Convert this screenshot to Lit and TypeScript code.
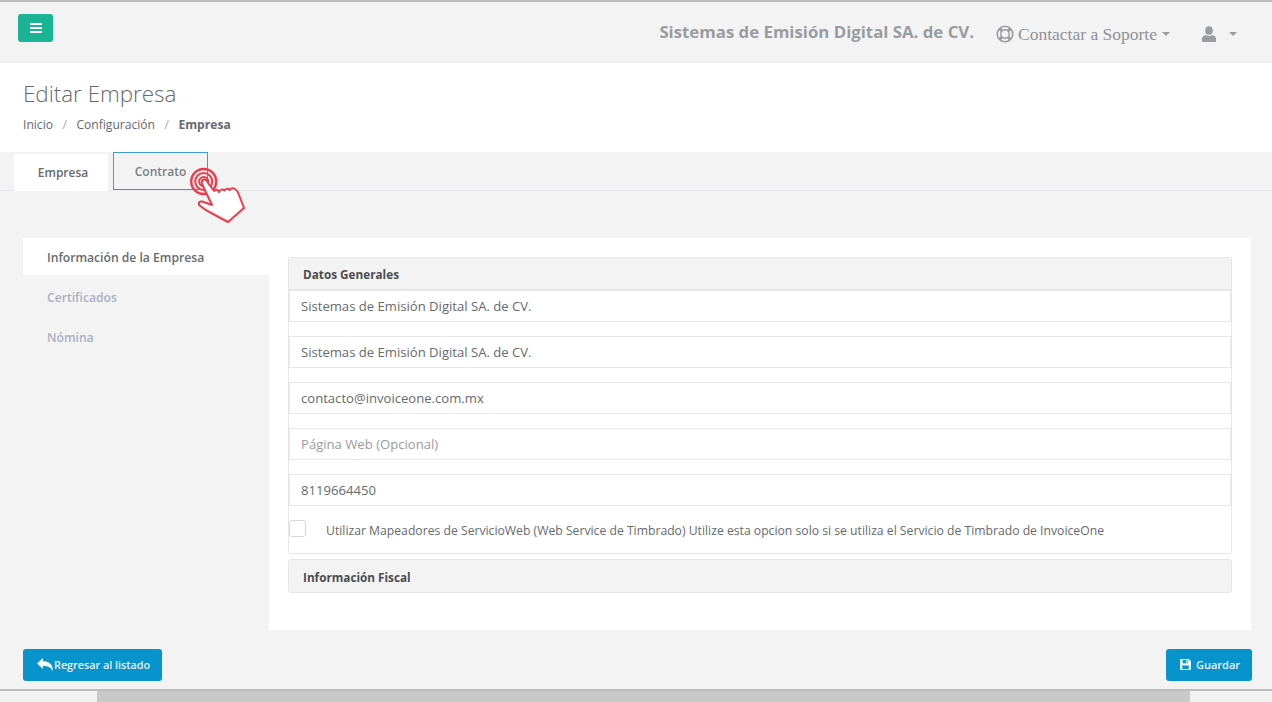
import { LitElement, html, css } from "lit";
import { customElement } from "lit/decorators.js";

@customElement("app-root")
export class AppRoot extends LitElement {
  static styles = css`
    :host { display: block; width: 1272px; height: 702px; overflow: hidden; position: relative; background: #f3f3f4; font-family: "Open Sans", sans-serif; color: #676a6c; font-size: 13px; }
    .page { display: flex; flex-direction: column; height: 702px; }
    .top { height: 60px; border-top: 2px solid #bbb; border-bottom: 1px solid #ececec; display: flex; align-items: flex-start; padding: 0 35px 0 18px; }
    .menu { width: 35px; height: 28px; margin-top: 12px; background: #1ab394; border-radius: 3px; display: flex; align-items: center; justify-content: center; }
    .right { margin-left: auto; display: flex; align-items: center; height: 60px; color: #999c9e; }
    .company { font-weight: 700; font-size: 16.8px; color: #999c9e; margin-right: 22px; margin-top: -1px; }
    .support { font-family: "Liberation Serif", serif; font-size: 17.5px; color: #8f9294; display: flex; align-items: center; gap: 4px; margin-top: 4px; }
    .caret { width: 0; height: 0; border-left: 4px solid transparent; border-right: 4px solid transparent; border-top: 4px solid #999c9e; margin-left: 1px; }
    .user { display: flex; align-items: center; margin-left: 32px; gap: 13px; margin-top: 3px; }
    .title { height: 89px; background: #fff; box-sizing: border-box; padding: 16px 23px 0; }
    h2 { margin: 0; font-weight: 300; font-size: 22.4px; line-height: 30px; color: #676a6c; }
    .crumbs { display: flex; margin-top: 7px; font-size: 12.1px; line-height: 17px; }
    .crumbs .sep { color: #a9abad; margin: 0 9.5px; }
    .crumbs b { font-weight: 700; }
    .tabs { display: flex; height: 38px; padding-left: 14px; gap: 5px; border-bottom: 1px solid #e7eaec; box-sizing: content-box; }
    .tab { box-sizing: border-box; width: 95px; display: flex; align-items: center; justify-content: center; font-weight: 600; font-size: 12px; color: #676a6c; }
    .tab.on { background: #fff; margin-top: 2px; height: 37px; width: 94px; border-radius: 3px 3px 0 0; font-weight: 600; margin-bottom: -1px; padding: 0 0 1px 4px; }
    .tab.focus { border: 1px solid #3ba0d0; height: 38px; color: #7c7f81; }
    .panel { margin: 47px 21px 0 23px; height: 392px; display: flex; background: #f3f3f4; box-sizing: border-box; }
    .side { width: 246px; flex: none; }
    .side div { height: 40px; box-sizing: border-box; padding-left: 24px; display: flex; align-items: center; font-weight: 600; font-size: 12.15px; color: #a7b1c2; }
    .side div.on { height: 37px; background: #fff; color: #676a6c; padding-top: 1px; }
    .side div.second { margin-top: 2px; }
    .main { flex: 1; background: #fff; padding: 19px 19px 0 19px; }
    .box { border: 1px solid #e7e7e7; border-radius: 3px; }
    .box-h { height: 32px; box-sizing: border-box; background: #f3f3f3; border-bottom: 1px solid #e7e7e7; padding-left: 14px; display: flex; align-items: center; font-weight: 700; font-size: 11.75px; color: #4b4e50; border-radius: 3px 3px 0 0; }
    .fields { display: flex; flex-direction: column; gap: 14px; }
    .fld { display: block; box-sizing: border-box; width: 100%; height: 32px; border: 1px solid #e7e7e7; background: #fff; outline: none; padding: 0 11px; margin: 0; font: 13.1px "Open Sans", sans-serif; color: #676a6c; border-radius: 0; }
    .fld::placeholder { color: #9a9c9e; opacity: 1; }
    .check { display: flex; align-items: flex-start; height: 47px; }
    .cb { width: 15px; height: 15px; border: 1px solid #d8d8d8; border-radius: 3px; background: #fff; margin-top: 14px; flex: none; }
    .check span { margin-left: 20px; margin-top: 16px; font-size: 12.2px; line-height: 17px; color: #676a6c; }
    .fiscal { margin-top: 5px; height: 34px; box-sizing: border-box; background: #f3f3f3; padding: 1px 0 0 14px; display: flex; align-items: center; font-weight: 700; font-size: 11.75px; color: #4b4e50; }
    .actions { display: flex; justify-content: space-between; margin: 19px 20px 0 23px; }
    .btn { height: 32px; box-sizing: border-box; background: #0793cc; color: #e6f3fa; border-radius: 3px; display: flex; align-items: center; font-weight: 600; font-size: 10.8px; padding-bottom: 1px; }
    .back { width: 139px; padding-left: 14px; gap: 1px; }
    .save { width: 86px; padding-left: 14px; gap: 5px; font-size: 11px; }
    .scroll { margin-top: auto; height: 13px; border-top: 2px solid #bdbdbd; background: #f1f1f1; box-sizing: border-box; padding-left: 97px; }
    .thumb { width: 1093px; height: 11px; background: #c9c9c9; }
    .hand { position: absolute; left: 188px; top: 165px; width: 60px; height: 60px; }
    svg { display: block; }
  `;

  render() {
    return html`
      <div class="page">
        <div class="top">
          <div class="menu">
            <svg width="12" height="10" viewBox="0 0 12 10" fill="#fff"><rect y="0" width="12" height="2"/><rect y="4" width="12" height="2"/><rect y="8" width="12" height="2"/></svg>
          </div>
          <div class="right">
            <span class="company">Sistemas de Emisión Digital SA. de CV.</span>
            <span class="support">
              <svg width="18" height="18" viewBox="0 0 18 18" fill="none" stroke="#999c9e"><circle cx="9" cy="9" r="7.8" stroke-width="1.6"/><circle cx="9" cy="9" r="4.2" stroke-width="1.4"/><path d="M3.5 3.5 6 6M14.5 3.5 12 6M3.5 14.5 6 12M14.5 14.5 12 12" stroke-width="3"/></svg>
              Contactar a Soporte<i class="caret"></i>
            </span>
            <span class="user">
              <svg width="14" height="16" viewBox="0 0 14 16" fill="#999c9e"><ellipse cx="7" cy="4.5" rx="3.8" ry="4.3"/><path d="M0 16V12.5C0 10.5 2 9.5 4 9 5.5 10.2 8.5 10.2 10 9 12 9.5 14 10.5 14 12.5V16Z"/></svg>
              <i class="caret" style="margin-left:0"></i>
            </span>
          </div>
        </div>
        <div class="title">
          <h2>Editar Empresa</h2>
          <div class="crumbs"><span>Inicio</span><span class="sep">/</span><span>Configuración</span><span class="sep">/</span><b>Empresa</b></div>
        </div>
        <div class="tabs">
          <div class="tab on">Empresa</div>
          <div class="tab focus">Contrato</div>
        </div>
        <div class="panel">
          <div class="side">
            <div class="on">Información de la Empresa</div>
            <div class="second">Certificados</div>
            <div>Nómina</div>
          </div>
          <div class="main">
            <div class="box">
              <div class="box-h">Datos Generales</div>
              <div class="fields">
                <input class="fld" value="Sistemas de Emisión Digital SA. de CV." />
                <input class="fld" value="Sistemas de Emisión Digital SA. de CV." />
                <input class="fld" value="contacto@invoiceone.com.mx" />
                <input class="fld" placeholder="Página Web (Opcional)" />
                <input class="fld" value="8119664450" />
              </div>
              <div class="check">
                <i class="cb"></i>
                <span>Utilizar Mapeadores de ServicioWeb (Web Service de Timbrado) Utilize esta opcion solo si se utiliza el Servicio de Timbrado de InvoiceOne</span>
              </div>
            </div>
            <div class="box fiscal">Información Fiscal</div>
          </div>
        </div>
        <div class="actions">
          <div class="btn back">
            <svg width="16" height="14" viewBox="0 0 16 14" fill="#f2f9fc"><path d="M0 5.5 6 0V3.2C11.5 3.2 16 5.5 16 13.5 14.5 9.5 11 8 6 8V11Z"/></svg>
            Regresar al listado
          </div>
          <div class="btn save">
            <svg width="11" height="11" viewBox="0 0 12 12" fill="#e6f3fa"><path fill-rule="evenodd" d="M1 0H9.5L12 2.5V11A1 1 0 0 1 11 12H1A1 1 0 0 1 0 11V1A1 1 0 0 1 1 0ZM3 1V4.5H8.5V1ZM6.5 1.5H8V4H6.5ZM2.5 7V11H9.5V7Z"/></svg>
            Guardar
          </div>
        </div>
        <div class="scroll"><div class="thumb"></div></div>
      </div>
      <svg class="hand" viewBox="188 165 60 60" fill="none" stroke="#ee3b4a">
        <circle cx="203.7" cy="181.5" r="12.5" stroke-width="2.4"/>
        <circle cx="203.7" cy="181.5" r="8.5" stroke-width="2"/>
        <circle cx="203.7" cy="181.5" r="4.5" stroke-width="2"/>
        <path fill="#fff" stroke-width="2" stroke-linejoin="round" d="M202 184Q201 179 205 179.5 207 180 208 183L214 191Q217 188 219 192 221 188 224.5 190.5 227 187.5 229.5 190 232 187 235 189 238 191 239 195L244 208 228 222 213 214Q205 210 199 205 198 201 202 201.5L212 205Z"/>
      </svg>
    `;
  }
}
